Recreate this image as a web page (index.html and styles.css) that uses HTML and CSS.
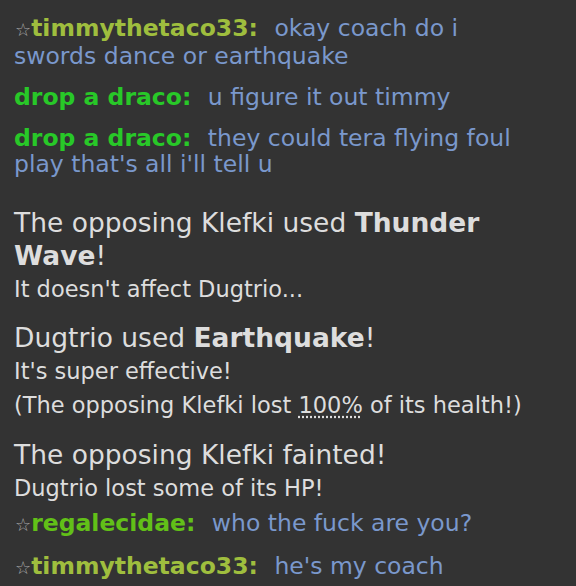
FILE: index.html
```html
<!DOCTYPE html>
<html lang="en">
	<head>
		<meta charset="UTF-8" />
		<meta name="viewport" content="width=device-width, initial-scale=1.0" />
		<title>Battle log</title>
		<link rel="stylesheet" href="styles.css">
	</head>
	<body>
		<div class="log">
			<div class="chat">
				<small class="rank">☆</small><strong class="name timmy">timmythetaco33:</strong>
				<em class="msg">okay coach do i swords dance or earthquake</em>
			</div>
			<div class="chat">
				<strong class="name draco">drop a draco:</strong>
				<em class="msg">u figure it out timmy</em>
			</div>
			<div class="chat">
				<strong class="name draco">drop a draco:</strong>
				<em class="msg">they could tera flying foul play that's all i'll tell u</em>
			</div>

			<div class="battle">
				<div class="big">The opposing Klefki used <strong>Thunder Wave</strong>!</div>
				<div class="small">It doesn't affect Dugtrio...</div>
			</div>
			<div class="battle">
				<div class="big">Dugtrio used <strong>Earthquake</strong>!</div>
				<div class="small">It's super effective!</div>
				<div class="small">(The opposing Klefki lost <abbr title="100%">100%</abbr> of its health!)</div>
			</div>
			<div class="battle">
				<div class="big">The opposing Klefki fainted!</div>
				<div class="small">Dugtrio lost some of its HP!</div>
			</div>

			<div class="chat">
				<small class="rank">☆</small><strong class="name regal">regalecidae:</strong>
				<em class="msg">who the fuck are you?</em>
			</div>
			<div class="chat">
				<small class="rank">☆</small><strong class="name timmy">timmythetaco33:</strong>
				<em class="msg">he's my coach</em>
			</div>
		</div>
	</body>
</html>
```

FILE: styles.css
```css
* {
	margin: 0;
	padding: 0;
}

body {
	background-color: #333;
	font-family: "DejaVu Sans", Verdana, sans-serif;
	padding: 8px 0 0 14px;
	overflow: hidden;
}

.log {
	width: 518px;
}

.chat {
	font-size: 23.5px;
	line-height: 26px;
	padding: 7px 0 8px;
}

.chat .rank {
	font-size: 18px;
	color: #a8a8a8;
	margin-left: 1px;
}

.chat .name {
	font-weight: bold;
	margin-right: 9px;
}

.chat .timmy {
	color: #9fbe3e;
}

.chat .draco {
	color: #28c828;
}

.chat .regal {
	color: #62c018;
}

.chat .msg {
	font-style: normal;
	color: #7a98cc;
}

.battle {
	color: #ddd;
	margin-top: 15.5px;
}

.chat + .battle {
	margin-top: 20.5px;
}

.battle + .chat {
	margin-top: -2px;
}

.battle .big {
	font-size: 26.5px;
	line-height: 33px;
}

.battle .small {
	font-size: 22.5px;
	line-height: 34px;
}

.battle abbr {
	text-decoration: underline dotted;
	text-underline-offset: 3px;
}
```
